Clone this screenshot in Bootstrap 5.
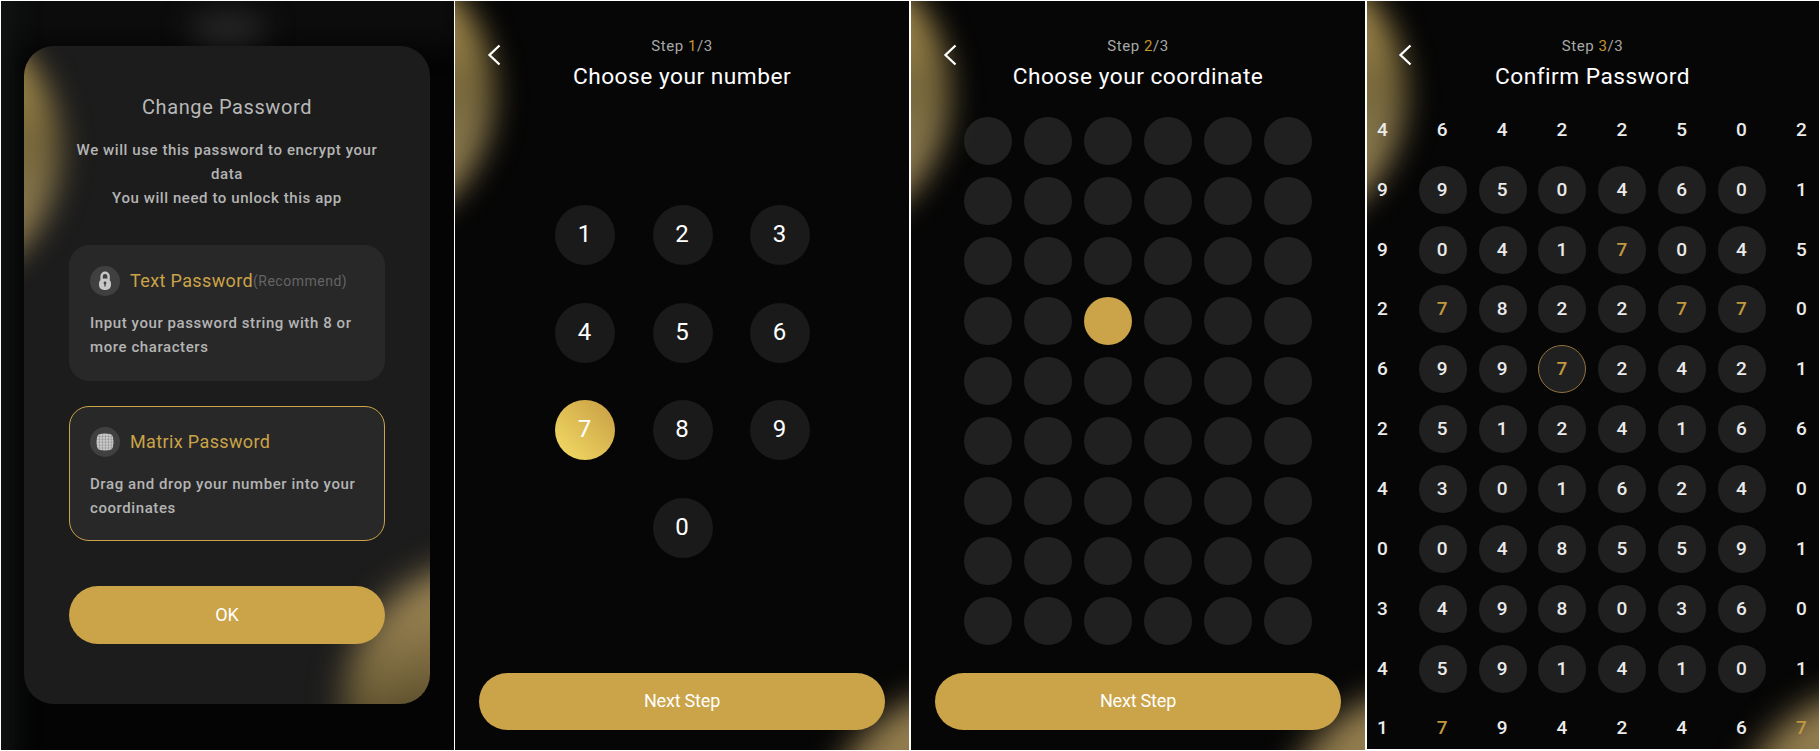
<!DOCTYPE html>
<html lang="en">
<head>
<meta charset="utf-8">
<meta name="viewport" content="width=device-width, initial-scale=1">
<title>Change Password</title>
<link href="https://cdn.jsdelivr.net/npm/bootstrap@5.3.0/dist/css/bootstrap.min.css" rel="stylesheet">
<style>
:root{--gold:#cba348}
body{font-family:Roboto,"Liberation Sans",sans-serif;background:#fff;width:1820px;height:751px;overflow:hidden;padding:1px;color:#fff}
.screen{height:749px;background:#060606;flex:none;isolation:isolate}
.s1{width:453px;margin-right:1px;background:#040404;padding:45px 24px 46px 23px}
.s2{width:454px;margin-right:2px}
.s3{width:454px;margin-right:2px}
.s4{width:452px;height:748px}
.blob{position:absolute;width:286px;height:286px;border-radius:50%;filter:blur(15px);z-index:-1}
.blob-a{left:-247px;top:-50px;background:linear-gradient(180deg,#ae9251 5%,#a48b4c 20%,#76663a 47%,#84744a 66%,#947f50 83%)}
.blob-b{right:-201px;bottom:-228px;filter:blur(17px);background:linear-gradient(165deg,#a88f5a 6%,#957f4f 20%,#6c5d36 40%,#3c331c 56%)}
.haze{position:absolute;z-index:-1;filter:blur(12px)}
.haze-top{left:188px;top:10px;width:78px;height:34px;border-radius:50%;background:#262626;filter:blur(14px)}
.haze-strip{left:-20px;top:-20px;width:480px;height:64px;background:#0b0c0b}
.haze-left{left:-20px;top:-20px;width:32px;height:800px;background:#121414}
.sheet{height:658px;border-radius:30px;background:#1c1c1c;padding:46px 45px 45px;isolation:isolate}
.sheet .blob-a{top:-39px;left:-250px}
.sheet .blob-b{right:-200px;bottom:-145px}
.sheet-title{font-size:20px;letter-spacing:.6px;line-height:30px;color:#b8b8b8}
.copy{font-size:15px;font-weight:500;line-height:24px;letter-spacing:.58px;color:#b4b4b4}
.sheet-copy{margin-top:16px;white-space:nowrap}
.option{height:136px;border-radius:20px;background:#282828;padding:20px 20px;border:1px solid #282828}
.option-first{margin-top:35px}
.option.active{border-color:var(--gold);height:135px;margin-top:25px}
.option-icon{width:30px;height:30px;background:#404040;flex:none}
.option-name{font-size:18px;letter-spacing:.37px;color:var(--gold);margin-left:10px;line-height:30px}
.option-note{font-size:14px;letter-spacing:.5px;color:#646464}
.option .copy{margin-top:15px;white-space:nowrap}
.btn-gold,.btn-gold:hover{background:var(--gold);color:#fff;border:0;border-radius:30px;height:57px;font-size:18px;letter-spacing:-.2px;padding:0 0 2px;width:406px}
.sheet .btn-gold{height:58px;width:316px;margin-top:45px}
.step{font-size:15px;line-height:20px;letter-spacing:.55px;color:#a8a8a8;padding-top:35px}
.step span{color:#c4952f}
.step-title{font-size:22.7px;line-height:30px;letter-spacing:.5px;padding-top:6px}
.back{position:absolute;left:32px;top:42px}
.s4 .back{left:31px}
.s4 .step,.s4 .step-title{padding-right:1px}
.keypad{display:grid;grid-template-columns:repeat(3,60px);gap:37.6px 37.4px;justify-content:center;margin-top:113px;padding-left:1px}
.key{width:60px;height:60px;background:#1a1a1a;font-size:24px;line-height:59px;text-align:center;padding-right:1px}
.key.on{background:linear-gradient(45deg,#f0d863 8%,#cba146 92%)}
.key:last-child{grid-column:2}
.foot{margin-top:auto;margin-bottom:20px}
.dots{display:grid;grid-template-columns:repeat(6,48px);gap:12px;justify-content:center;margin-top:25px}
.dot{width:48px;height:48px;background:#202020}
.dot.soft{background:rgba(43,43,43,.72)}
.dot.on{background:var(--gold)}
.matrix{display:grid;grid-template-columns:repeat(8,59.85px);grid-auto-rows:59.85px;margin:8px 0 0 -14px;place-items:center}
.cell{width:48px;height:48px;font-size:19px;font-weight:500;line-height:46px;text-align:center;color:#ebebeb;border:1px solid transparent;padding-right:1px}
.cell.in{background:#202020}
.cell.seven{color:#c09840}
.cell.on{border-color:#92723a}
</style>
</head>
<body>
<div class="d-flex">
  <section class="screen s1 position-relative overflow-hidden">
    <div class="haze haze-strip"></div><div class="haze haze-left"></div><div class="haze haze-top"></div>
    <div class="sheet position-relative overflow-hidden">
      <div class="blob blob-a"></div><div class="blob blob-b"></div>
      <div class="sheet-title text-center">Change Password</div>
      <div class="copy sheet-copy text-center">We will use this password to encrypt your<br>data<br>You will need to unlock this app</div>
      <div class="option option-first">
        <div class="d-flex align-items-center">
          <span class="option-icon rounded-circle d-flex align-items-center justify-content-center">
            <svg width="14" height="20" viewBox="0 0 14 20"><path d="M3.6 9V5.3a3.5 3.5 0 0 1 7 0V9" fill="none" stroke="#c8c8c8" stroke-width="2.4"/><rect x="1" y="7.6" width="12" height="11.4" rx="5" fill="#c8c8c8"/><circle cx="7" cy="12" r="1.4" fill="#444"/><path d="M7 12v3.6" stroke="#444" stroke-width="1.3"/></svg>
          </span>
          <span class="option-name">Text Password</span><span class="option-note">(Recommend)</span>
        </div>
        <div class="copy">Input your password string with 8 or<br>more characters</div>
      </div>
      <div class="option active">
        <div class="d-flex align-items-center">
          <span class="option-icon rounded-circle d-flex align-items-center justify-content-center">
            <svg width="18" height="18" viewBox="0 0 18 18"><path d="M4 1Q9 .2 14 1 16.6 1.500 17 4.200 18 9 17 13.800 16.500 16.500 14 17 9 17.900 4 17 1.500 16.500 1 13.800 0 9 1 4.200 1.400 1.500 4 1Z" fill="#cacaca"/><path d="M3.500 1v16M6.500 1v16M9.500 1v16M12.500 1v16M15.300 2v14M1 3.500h16M1 6.300h16M1 9.200h16M1 12.200h16M2 15h14" stroke="#8a8a8a" stroke-width=".5"/></svg>
          </span>
          <span class="option-name">Matrix Password</span>
        </div>
        <div class="copy">Drag and drop your number into your<br>coordinates</div>
      </div>
      <button class="btn btn-gold">OK</button>
    </div>
  </section>

  <section class="screen s2 position-relative overflow-hidden d-flex flex-column text-center">
    <div class="blob blob-a"></div><div class="blob blob-b"></div>
    <svg class="back" width="16" height="24" viewBox="0 0 16 24"><path d="M12.500 2.500 2.500 12l10 9.500" fill="none" stroke="#fff" stroke-width="2.3"/></svg>
    <div class="step">Step <span>1</span>/3</div>
    <div class="step-title">Choose your number</div>
    <div class="keypad" id="keypad"></div>
    <div class="foot"><button class="btn btn-gold">Next Step</button></div>
  </section>

  <section class="screen s3 position-relative overflow-hidden d-flex flex-column text-center">
    <div class="blob blob-a"></div><div class="blob blob-b"></div>
    <svg class="back" width="16" height="24" viewBox="0 0 16 24"><path d="M12.500 2.500 2.500 12l10 9.500" fill="none" stroke="#fff" stroke-width="2.3"/></svg>
    <div class="step">Step <span>2</span>/3</div>
    <div class="step-title">Choose your coordinate</div>
    <div class="dots" id="dots"></div>
    <div class="foot"><button class="btn btn-gold">Next Step</button></div>
  </section>

  <section class="screen s4 position-relative overflow-hidden d-flex flex-column text-center">
    <div class="blob blob-a"></div><div class="blob blob-b"></div>
    <svg class="back" width="16" height="24" viewBox="0 0 16 24"><path d="M12.500 2.500 2.500 12l10 9.500" fill="none" stroke="#fff" stroke-width="2.3"/></svg>
    <div class="step">Step <span>3</span>/3</div>
    <div class="step-title">Confirm Password</div>
    <div class="matrix" id="matrix"></div>
  </section>
</div>
<script src="https://cdn.jsdelivr.net/npm/bootstrap@5.3.0/dist/js/bootstrap.bundle.min.js"></script>
<script>
const fill = (id, items) => document.getElementById(id).innerHTML = items.join('');
fill('keypad', [...'1234567890'].map(n => `<div class="key rounded-circle${n === '7' ? ' on' : ''}">${n}</div>`));
fill('dots', Array.from({length: 54}, (_, i) => `<div class="dot rounded-circle${i === 20 ? ' on' : i === 0 ? ' soft' : ''}"></div>`));
const rows = ['46422502', '99504601', '90417045', '27822770', '69972421', '25124166',
              '43016240', '00485591', '34980360', '45914101', '17942467'];
fill('matrix', rows.flatMap((row, r) => [...row].map((n, c) => {
  const inside = r > 0 && r < 10 && c > 0 && c < 7;
  return `<div class="cell rounded-circle${inside ? ' in' : ''}${n === '7' ? ' seven' : ''}${r === 4 && c === 3 ? ' on' : ''}">${n}</div>`;
})));
</script>
</body>
</html>
